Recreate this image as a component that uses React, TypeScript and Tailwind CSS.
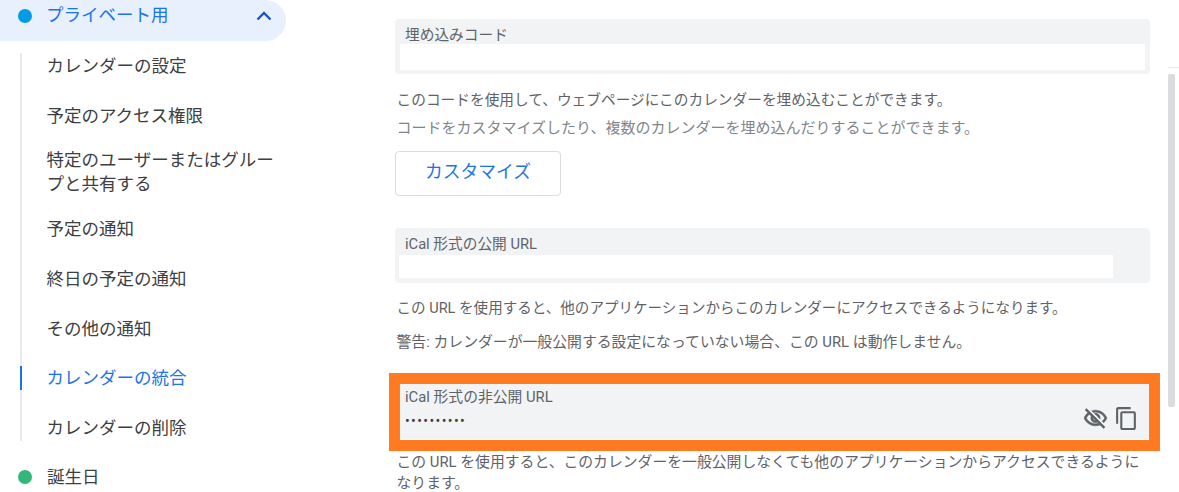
import React from 'react';
import { MdOutlineContentCopy } from 'react-icons/md';

const subItems = [
  { label: 'カレンダーの設定' },
  { label: '予定のアクセス権限' },
  { label: '特定のユーザーまたはグループと共有する' },
  { label: '予定の通知' },
  { label: '終日の予定の通知' },
  { label: 'その他の通知' },
  { label: 'カレンダーの統合', active: true },
  { label: 'カレンダーの削除' },
];

function EyeOffIcon() {
  return (
    <svg className="w-[25px] h-[25px]" viewBox="0 0 24 24" fill="currentColor" stroke="currentColor" strokeWidth="0.5">
      <path d="M12 6c3.79 0 7.17 2.13 8.82 5.5-.59 1.22-1.42 2.27-2.41 3.12l1.41 1.41c1.39-1.23 2.49-2.77 3.18-4.53C21.27 7.11 17 4 12 4c-1.27 0-2.49.2-3.64.57l1.65 1.65C10.66 6.09 11.32 6 12 6zm-1.07 1.14L13 9.21c.57.25 1.03.71 1.28 1.28l2.07 2.07c.08-.34.14-.7.14-1.07C16.5 9.01 14.48 7 12 7c-.37 0-.72.05-1.07.14zM2.01 3.87l2.68 2.68C3.06 7.83 1.77 9.53 1 11.5 2.73 15.89 7 19 12 19c1.52 0 2.98-.29 4.32-.82l3.42 3.42 1.41-1.41L3.42 2.45 2.01 3.87zm7.5 7.5l2.61 2.61c-.04.01-.08.02-.12.02-1.38 0-2.5-1.12-2.5-2.5 0-.05.01-.08.01-.13zm-3.4-3.4l1.75 1.75c-.23.55-.36 1.15-.36 1.78 0 2.48 2.02 4.5 4.5 4.5.63 0 1.23-.13 1.77-.36l.98.98c-.88.24-1.8.38-2.75.38-3.79 0-7.17-2.13-8.82-5.5.7-1.43 1.72-2.61 2.93-3.53z" />
    </svg>
  );
}

function Sidebar() {
  return (
    <aside className="w-[286px] shrink-0 text-[17.5px] text-[#3c4043]">
      <div className="h-[41px] flex items-center rounded-r-full bg-[#e8f0fe] text-[#1a73e8] pl-[18px] pr-[13px] pb-[10px]">
        <span className="w-[14px] h-[14px] rounded-full bg-[#039be5] shrink-0" />
        <span className="ml-[14px] flex-1 leading-[30px] -mt-[1px]">プライベート用</span>
        <svg className="w-[18px] h-[18px] text-[#1a56c4]" viewBox="0 0 18 18" fill="none" stroke="currentColor" strokeWidth="2.4">
          <path d="M2.5 12.5 9 6l6.5 6.5" />
        </svg>
      </div>
      <div className="my-[12px] ml-[20px] w-[258px] border-l-2 border-[#e8eaed] flex flex-col">
        <ul className="-my-[12px] flex flex-col">
          {subItems.map((item) => (
            <li key={item.label} className="min-h-[49.7px] py-[8px] flex items-center leading-[24px]">
              {item.active ? (
                <span className="-ml-[2px] pl-[24.5px] border-l-2 border-[#1a73e8] text-[#1a73e8]">{item.label}</span>
              ) : (
                <span className="pl-[24.5px]">{item.label}</span>
              )}
            </li>
          ))}
        </ul>
      </div>
      <div className="-mt-[1px] flex items-center h-[50px] pl-[18px]">
        <span className="w-[14px] h-[14px] rounded-full bg-[#33b679] shrink-0" />
        <span className="ml-[15px]">誕生日</span>
      </div>
    </aside>
  );
}

function Field({ label, inputClass }: { label: string; inputClass: string }) {
  return (
    <div className="h-[55px] rounded-[4px] bg-[#f1f3f4] flex flex-col">
      <div className="h-[25px] pt-[5px] pl-[10px] text-[14.7px] leading-[22px] text-[#5f6368]">{label}</div>
      <div className={inputClass} />
    </div>
  );
}

function Content() {
  return (
    <main className="w-[755px] ml-[109px] pt-[19px] shrink-0 text-[#5f6368]">
      <Field label="埋め込みコード" inputClass="mx-[5px] h-[26px] bg-white" />
      <p className="mt-[15px] pl-[1.5px] leading-[22px] text-[14.7px]">このコードを使用して、ウェブページにこのカレンダーを埋め込むことができます。</p>
      <p className="mt-[6px] pl-[1.5px] leading-[22px] text-[15px] text-[#80868b]">コードをカスタマイズしたり、複数のカレンダーを埋め込んだりすることができます。</p>
      <button className="mt-[12px] block w-[166px] h-[45px] pb-[2px] rounded-[4px] border border-[#dadce0] bg-white text-[17.8px] text-[#1a73e8]">
        カスタマイズ
      </button>
      <div className="mt-[32px]">
        <Field label="iCal 形式の公開 URL" inputClass="ml-[4px] mr-[37px] mt-[2px] h-[23px] bg-white" />
      </div>
      <p className="mt-[14px] pl-[1.5px] leading-[22px] text-[14.56px]">この URL を使用すると、他のアプリケーションからこのカレンダーにアクセスできるようになります。</p>
      <p className="mt-[12px] pl-[1.5px] leading-[22px] text-[14.85px]">警告: カレンダーが一般公開する設定になっていない場合、この URL は動作しません。</p>
      <div className="mt-[20px] -ml-[6px] -mr-[10px] h-[78px] border-[11px] border-[#ff7a21]">
        <div className="h-[56px] bg-[#f1f3f4] pl-[5px] pr-[10px] flex items-end justify-between border-b border-white">
          <div className="self-start pt-[2px]">
            <div className="text-[14.8px] leading-[22px] text-[#5f6368]">iCal 形式の非公開 URL</div>
            <div className="mt-[3px] text-[14px] leading-[20px] text-[#3c4043] tracking-[1.4px]">••••••••••</div>
          </div>
          <div className="flex items-center gap-[6px] pb-[8px] text-[#5f6368]">
            <EyeOffIcon />
            <MdOutlineContentCopy size={25} />
          </div>
        </div>
      </div>
      <p className="mt-[1px] pl-[1.5px] leading-[21px] text-[14.84px]">
        この URL を使用すると、このカレンダーを一般公開しなくても他のアプリケーションからアクセスできるように
        <br />
        なります。
      </p>
    </main>
  );
}

export default function App() {
  return (
    <div
      className="w-[1179px] h-[492px] overflow-hidden bg-white flex"
      style={{ fontFamily: 'Roboto, "Noto Sans CJK JP", sans-serif' }}
    >
      <Sidebar />
      <Content />
      <div className="ml-[18px] flex-1 pt-[67px]">
        <div className="h-[1px] bg-[#e8eaed]" />
        <div className="mt-[6px] w-[7px] h-[333px] rounded-t-[2px] rounded-b-[2px] bg-[#dadce0]" />
      </div>
    </div>
  );
}
